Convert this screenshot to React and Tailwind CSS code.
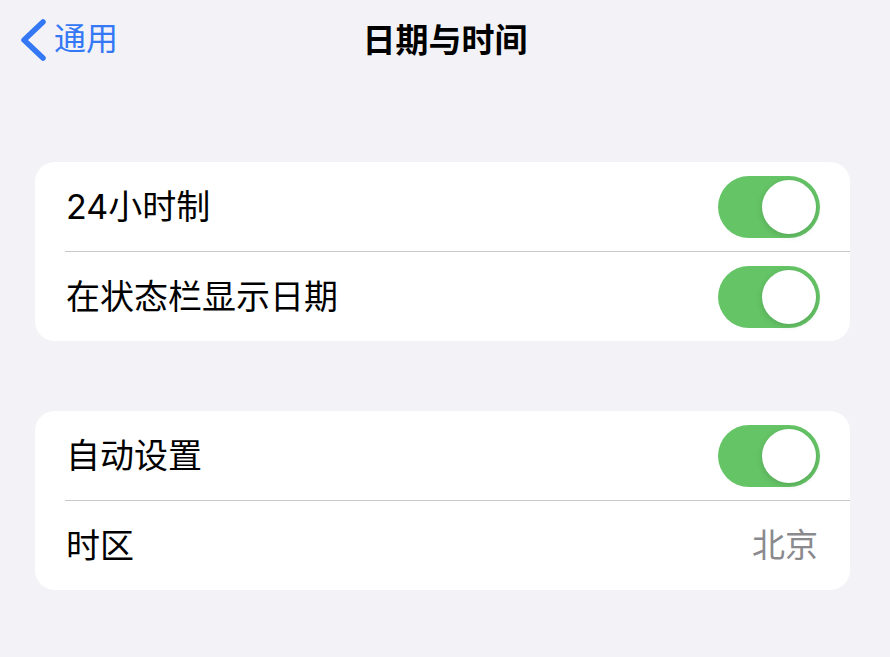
import React, { useState } from "react";

const fontStack = {
  fontFamily: 'Inter, "Noto Sans CJK SC", "Noto Sans", sans-serif',
};

function Toggle({ on, onChange }) {
  return (
    <button
      type="button"
      onClick={() => onChange(!on)}
      className={`relative flex h-[62px] w-[102px] shrink-0 items-center rounded-full p-[4px] transition-colors ${
        on ? "justify-end bg-[#65c466]" : "justify-start bg-[#e9e9eb]"
      }`}
    >
      <span className="block h-[54px] w-[54px] rounded-full bg-white shadow-[0_2px_6px_rgba(0,0,0,0.15)]" />
    </button>
  );
}

function Row({ label, children, divider }) {
  return (
    <>
      <div className="flex h-[89px] items-center justify-between pl-[31px] pr-[30px]">
        <span className="text-[34px] leading-none text-black">{label}</span>
        {children}
      </div>
      {divider && <div className="ml-[30px] h-px bg-[#c8c8cc]" />}
    </>
  );
}

export default function App() {
  const [clock24, setClock24] = useState(true);
  const [statusDate, setStatusDate] = useState(true);
  const [autoSet, setAutoSet] = useState(true);

  return (
    <div className="min-h-[657px] w-[890px] bg-[#f2f2f7]" style={fontStack}>
      {/* nav bar */}
      <div className="relative flex h-[80px] items-center justify-center">
        <button type="button" className="absolute left-[18px] top-[18px] flex items-center gap-[6px] text-[#3478f6]">
          <svg width="30" height="46" viewBox="0 0 30 46" fill="none">
            <path d="M25 4 L6 22 L25 40" stroke="currentColor" strokeWidth="5.5" strokeLinecap="round" strokeLinejoin="round" />
          </svg>
          <span className="-mt-[4px] text-[32px] leading-none">通用</span>
        </button>
        <h1 className="text-[33px] font-semibold leading-none text-black">日期与时间</h1>
      </div>

      <div className="ml-[35px] mr-[40px] mt-[82px] overflow-hidden rounded-[20px] bg-white">
        <Row label="24小时制" divider>
          <Toggle on={clock24} onChange={setClock24} />
        </Row>
        <Row label="在状态栏显示日期">
          <Toggle on={statusDate} onChange={setStatusDate} />
        </Row>
      </div>

      <div className="ml-[35px] mr-[40px] mt-[70px] overflow-hidden rounded-[20px] bg-white">
        <Row label="自动设置" divider>
          <Toggle on={autoSet} onChange={setAutoSet} />
        </Row>
        <Row label="时区">
          <span className="pr-[2px] text-[33px] leading-none text-[#8a8a8e]">北京</span>
        </Row>
      </div>
    </div>
  );
}
